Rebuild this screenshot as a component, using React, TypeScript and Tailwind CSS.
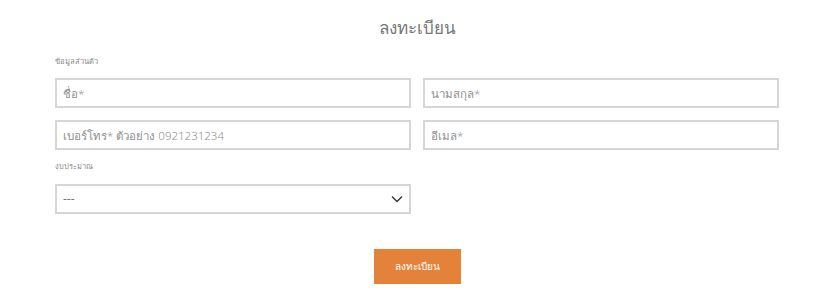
import { useState } from "react";

const inputCls =
  "h-[30px] w-full border-2 border-[#d6d6d6] bg-white px-[6px] text-[11.5px] font-light text-[#555] placeholder:text-[#8f8f8f] outline-none";

export default function App() {
  const [budget, setBudget] = useState("");

  return (
    <div className="min-h-[304px] w-[825px] bg-white font-['Noto_Sans','DejaVu_Sans',sans-serif]">
      <div className="pl-[55px] pr-[46px] pt-[16px]">
        <h2 className="text-center text-[17px] font-light leading-[24px] text-[#777]">ลงทะเบียน</h2>

        <p className="mt-[15px] text-[7.5px] leading-[12px] text-[#888]">ข้อมูลส่วนตัว</p>
        <div className="mt-[11px] grid grid-cols-2 gap-x-[12px] gap-y-[12px]">
          <input className={inputCls} placeholder="ชื่อ*" />
          <input className={inputCls} placeholder="นามสกุล*" />
          <input className={inputCls} placeholder="เบอร์โทร* ตัวอย่าง 0921231234" />
          <input className={inputCls} placeholder="อีเมล*" />
        </div>

        <p className="mt-[10px] text-[7.5px] leading-[12px] text-[#888]">งบประมาณ</p>
        <div className="mt-[12px] grid grid-cols-2 gap-x-[12px]">
          <div className="relative">
            <select
              value={budget}
              onChange={(e) => setBudget(e.target.value)}
              className="h-[30px] w-full appearance-none border-2 border-[#d6d6d6] bg-white px-[6px] text-[12px] text-[#777] outline-none"
            >
              <option value="">---</option>
              <option value="1">ต่ำกว่า 3 ล้าน</option>
              <option value="2">3 - 5 ล้าน</option>
            </select>
            <svg
              className="pointer-events-none absolute right-[8px] top-[11px]"
              width="12"
              height="8"
              viewBox="0 0 12 8"
              fill="none"
              stroke="#333"
              strokeWidth="1.4"
            >
              <path d="M1 1.5l5 5 5-5" />
            </svg>
          </div>
        </div>

        <div className="mt-[35px] flex justify-center">
          <button className="h-[35px] w-[87px] bg-[#e5823a] text-[10px] font-light text-white">ลงทะเบียน</button>
        </div>
      </div>
    </div>
  );
}
